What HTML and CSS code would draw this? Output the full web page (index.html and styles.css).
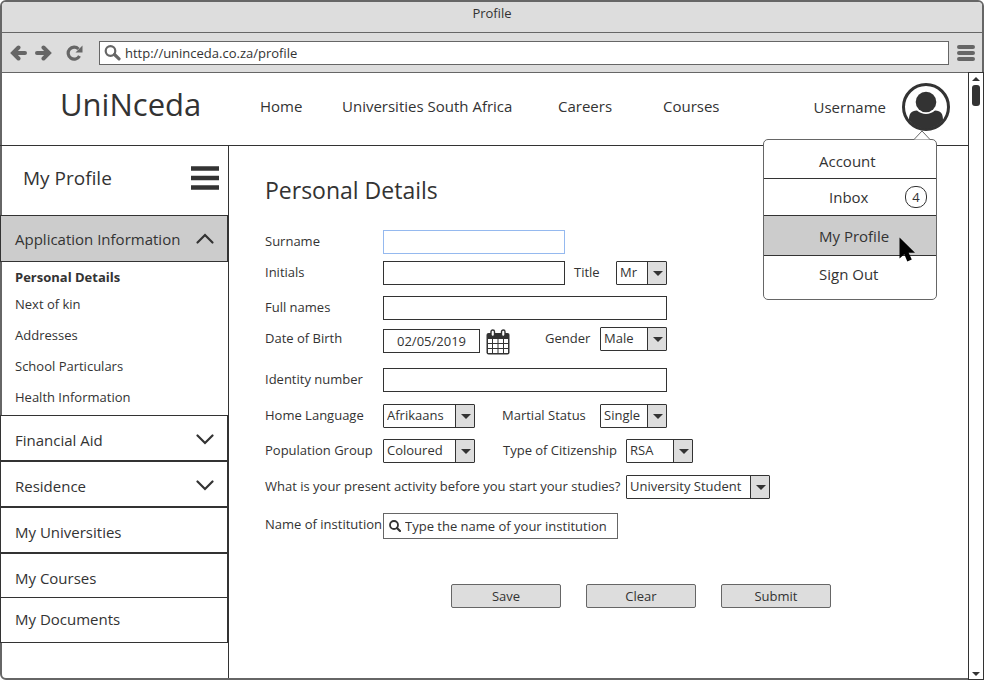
FILE: index.html
```html
<!DOCTYPE html>
<html lang="en">
<head>
<meta charset="utf-8">
<title>Profile</title>
<link rel="stylesheet" href="styles.css">
</head>
<body>
<div class="window">
  <div class="titlebar">Profile</div>
  <div class="toolbar">
    <button class="tool" type="button" aria-label="Back"><svg width="17" height="16" viewBox="0 0 17 16"><path d="M8.500 2.500 3 8l5.500 5.500M4 8h11" fill="none" stroke="#666" stroke-width="4" stroke-linecap="round"/></svg></button>
    <button class="tool" type="button" aria-label="Forward"><svg width="17" height="16" viewBox="0 0 17 16"><path d="M8.500 2.500 14 8l-5.500 5.500M13 8H2" fill="none" stroke="#666" stroke-width="4" stroke-linecap="round"/></svg></button>
    <button class="tool reload" type="button" aria-label="Reload"><svg width="17" height="16" viewBox="0 0 17 16"><path d="M13.500 11A6 6 0 1 1 12.500 4" fill="none" stroke="#666" stroke-width="3.200"/><path d="M16.500 .5V7.500H9.500z" fill="#666"/></svg></button>
    <label class="address">
      <svg width="17" height="16" viewBox="0 0 17 16"><circle cx="6.500" cy="6" r="4.800" fill="none" stroke="#666" stroke-width="2.200"/><path d="M10.500 9.500 15 13.800" stroke="#666" stroke-width="3.200" stroke-linecap="round"/></svg>
      <input type="text" aria-label="Address" value="http://uninceda.co.za/profile">
    </label>
    <button class="tool" type="button" aria-label="Browser menu"><svg width="18" height="16" viewBox="0 0 18 16"><path d="M2 2h14M2 8h14M2 14h14" stroke="#666" stroke-width="4" stroke-linecap="round"/></svg></button>
  </div>
  <div class="viewport">
    <div class="page">
      <header class="header">
        <a class="logo" href="#">UniNceda</a>
        <nav class="nav">
          <a href="#">Home</a>
          <a href="#">Universities South Africa</a>
          <a href="#">Careers</a>
          <a href="#">Courses</a>
        </nav>
        <div class="user">
          <span>Username</span>
          <svg width="48" height="48" viewBox="0 0 48 48"><circle cx="24" cy="24" r="22.500" fill="#fff" stroke="#333" stroke-width="3"/><circle cx="24" cy="19" r="10.300" fill="#333"/><path d="M7 37c0-6 2-9.500 8-9.500 5 4.600 13 4.600 18 0 6 0 8 3.500 8 9.500A21.500 21.500 0 0 1 7 37z" fill="#333"/></svg>
          <div class="menu">
            <svg class="pointer" width="18" height="10" viewBox="0 0 18 10"><path d="M1 9.500 9 1l8 8.500" fill="#fff" stroke="#666"/></svg>
            <a class="account" href="#">Account</a>
            <a class="inbox" href="#">Inbox<span class="badge">4</span></a>
            <a class="current" href="#">My Profile</a>
            <a class="signout" href="#">Sign Out</a>
            <svg class="cursor" width="17" height="26" viewBox="0 0 17 26"><path d="M.5.500V21.500L5.300 17.300 8.300 24.500 12.800 22.500 9.600 15.700H16z" fill="#000"/></svg>
          </div>
        </div>
      </header>
      <div class="columns">
        <aside class="sidebar">
          <div class="side-head">
            <h2>My Profile</h2>
            <button class="burger" type="button" aria-label="Toggle menu"><svg width="28" height="24" viewBox="0 0 28 24"><path d="M0 2.500h28M0 12h28M0 21.500h28" stroke="#333" stroke-width="4.500"/></svg></button>
          </div>
          <a class="box open" href="#">Application Information<svg width="20" height="12" viewBox="0 0 20 12"><path d="M2.500 9.500 10 2l7.500 7.500" fill="none" stroke="#333" stroke-width="2.200" stroke-linecap="round"/></svg></a>
          <div class="sub">
            <a class="active" href="#">Personal Details</a>
            <a href="#">Next of kin</a>
            <a href="#">Addresses</a>
            <a href="#">School Particulars</a>
            <a href="#">Health Information</a>
          </div>
          <a class="box" href="#">Financial Aid<svg width="20" height="12" viewBox="0 0 20 12"><path d="M2.500 1.500 10 9l7.500-7.500" fill="none" stroke="#333" stroke-width="2.200" stroke-linecap="round"/></svg></a>
          <a class="box" href="#">Residence<svg width="20" height="12" viewBox="0 0 20 12"><path d="M2.500 1.500 10 9l7.500-7.500" fill="none" stroke="#333" stroke-width="2.200" stroke-linecap="round"/></svg></a>
          <a class="box" href="#">My Universities</a>
          <a class="box" href="#">My Courses</a>
          <a class="box last" href="#">My Documents</a>
        </aside>
        <main class="main">
          <h1>Personal Details</h1>
          <form>
            <div class="fields">
              <div class="row">
                <label for="surname">Surname</label>
                <input class="medium focus" id="surname" type="text">
              </div>
              <div class="row">
                <label for="initials">Initials</label>
                <div class="group">
                  <input class="medium" id="initials" type="text">
                  <div class="pair">
                    <label for="title">Title</label>
                    <span class="select w-title"><select id="title"><option>Mr</option></select></span>
                  </div>
                </div>
              </div>
              <div class="row">
                <label for="names">Full names</label>
                <input class="wide" id="names" type="text">
              </div>
              <div class="row">
                <label for="dob">Date of Birth</label>
                <div class="group">
                  <div class="date">
                    <input id="dob" type="text" value="02/05/2019">
                    <svg width="24" height="26" viewBox="0 0 24 26"><path d="M2.500 4h19q2 0 2 2v17.500q0 2-2 2h-19q-2 0-2-2V6q0-2 2-2z" fill="#333"/><path d="M2 10h4v4H2zM7 10h4.500v4H7zM12.500 10h4.500v4h-4.500zM18 10h4v4h-4zM2 15h4v4H2zM7 15h4.500v4H7zM12.500 15h4.500v4h-4.500zM18 15h4v4h-4zM2 20h4v4H2zM7 20h4.500v4H7zM12.500 20h4.500v4h-4.500zM18 20h4v4h-4z" fill="#fff"/><rect x="5" y="1" width="3.500" height="6.500" rx="1.700" fill="#fff" stroke="#333" stroke-width="1.400"/><rect x="15.500" y="1" width="3.500" height="6.500" rx="1.700" fill="#fff" stroke="#333" stroke-width="1.400"/></svg>
                  </div>
                  <div class="pair">
                    <label class="l-gender" for="gender">Gender</label>
                    <span class="select w-short"><select id="gender"><option>Male</option></select></span>
                  </div>
                </div>
              </div>
              <div class="row">
                <label for="idno">Identity number</label>
                <input class="wide" id="idno" type="text">
              </div>
              <div class="row">
                <label for="language">Home Language</label>
                <div class="group">
                  <span class="select w-mid"><select id="language"><option>Afrikaans</option></select></span>
                  <div class="pair">
                    <label class="l-status" for="status">Martial Status</label>
                    <span class="select w-short"><select id="status"><option>Single</option></select></span>
                  </div>
                </div>
              </div>
              <div class="row">
                <label for="population">Population Group</label>
                <div class="group group-long">
                  <span class="select w-mid"><select id="population"><option>Coloured</option></select></span>
                  <div class="pair">
                    <label class="l-citizen" for="citizen">Type of Citizenship</label>
                    <span class="select w-short"><select id="citizen"><option>RSA</option></select></span>
                  </div>
                </div>
              </div>
              <div class="row question">
                <label for="activity">What is your present activity before you start your studies?</label>
                <span class="select w-long"><select id="activity"><option>University Student</option></select></span>
              </div>
              <div class="row">
                <label for="institution">Name of institution</label>
                <div class="search">
                  <svg width="12" height="12" viewBox="0 0 12 12"><circle cx="5" cy="5" r="4" fill="none" stroke="#333" stroke-width="1.800"/><path d="M8 8l3 3" stroke="#333" stroke-width="2.200" stroke-linecap="round"/></svg>
                  <input id="institution" type="text" placeholder="Type the name of your institution">
                </div>
              </div>
            </div>
            <div class="actions">
              <button type="button">Save</button>
              <button type="button">Clear</button>
              <button type="button">Submit</button>
            </div>
          </form>
        </main>
      </div>
    </div>
    <div class="scrollbar">
      <div class="arrow up"></div>
      <div class="thumb"></div>
      <div class="arrow down"></div>
    </div>
  </div>
</div>
</body>
</html>
```
FILE: styles.css
```css
* { box-sizing: border-box; }
body {
  margin: 0;
  color: #333;
  font: 13px/16px "Open Sans", "Liberation Sans", sans-serif;
}
a { color: inherit; text-decoration: none; }
h1, h2 { margin: 0; font-weight: 400; }
input, select, button { font: inherit; color: inherit; }
svg { display: block; flex: none; }

.window {
  display: flex;
  flex-direction: column;
  min-height: 100vh;
  border: 2px solid #666;
  border-radius: 6px;
}
.titlebar {
  height: 31px;
  padding: 3px 0 0;
  text-align: center;
  background: #ddd;
  border-bottom: 1px solid #666;
  border-radius: 4px 4px 0 0;
}
.toolbar {
  display: flex;
  align-items: center;
  height: 40px;
  padding: 0 7px 0 8px;
  gap: 8px;
  background: #ddd;
  border-bottom: 1px solid #666;
}
.tool { padding: 0; border: 0; background: none; }
.tool.reload { margin: 0 8px 0 6px; }
.address {
  flex: 1;
  display: flex;
  align-items: center;
  height: 24px;
  padding-left: 4px;
  gap: 4px;
  background: #fff;
  border: 1px solid #666;
}
.address input { flex: 1; padding: 0; border: 0; outline: 0; background: none; }

.viewport { flex: 1; display: flex; }
.page { flex: 1; display: flex; flex-direction: column; min-width: 0; }

.header {
  display: flex;
  align-items: center;
  height: 73px;
  margin-left: -2px;
  padding: 0 18px 4px 60px;
  border-bottom: 1px solid #333;
  font-size: 15px;
}
.logo { width: 200px; padding-bottom: 6px; font-size: 31px; line-height: 36px; }
.nav { display: grid; grid-template-columns: 82px 216px 105px auto; padding-bottom: 2px; }
.user { position: relative; display: flex; align-items: center; gap: 16px; margin-left: auto; }

.menu {
  position: absolute;
  z-index: 1;
  top: 56px;
  right: 13px;
  width: 174px;
  background: #fff;
  border: 1px solid #666;
  border-radius: 5px;
}
.menu a { display: flex; align-items: center; padding-left: 55px; }
.menu .account { height: 39px; padding-top: 4px; border-bottom: 1px solid #333; }
.menu .inbox { height: 37px; padding: 0 9px 0 65px; border-bottom: 1px solid #333; }
.menu .current { height: 40px; background: #ccc; border-bottom: 1px solid #333; }
.menu .signout { height: 43px; padding-bottom: 8px; }
.badge {
  width: 22px;
  height: 22px;
  margin-left: auto;
  border: 1px solid #333;
  border-radius: 10px;
  font-size: 13px;
  line-height: 20px;
  text-align: center;
}
.pointer { position: absolute; top: -10px; right: 5px; }
.cursor { position: absolute; top: 97px; right: 20px; }

.columns { flex: 1; display: flex; }
.sidebar { width: 227px; border-right: 1px solid #333; }
.side-head {
  display: flex;
  align-items: center;
  justify-content: space-between;
  height: 69px;
  padding: 0 9px 5px 21px;
}
.side-head h2 { font-size: 19px; line-height: 24px; }
.burger { padding: 0; border: 0; background: none; }
.box {
  display: flex;
  align-items: center;
  justify-content: space-between;
  height: 46px;
  margin-left: -2px;
  padding: 4px 12px 0 14px;
  border: 1px solid #333;
  background: #fff;
  font-size: 15px;
}
.box.open { height: 47px; padding-top: 0; background: #ccc; }
.box.last { margin-top: -2px; padding: 0 12px 2px 14px; }
.sub { display: flex; flex-direction: column; padding: 3px 13px 2px; }
.sub a { line-height: 31px; }
.sub .active { line-height: 24px; font-weight: 700; }

.main { flex: 1; padding: 30px 36px 70px; min-width: 0; }
h1 { margin-bottom: 26px; font-size: 23px; line-height: 28px; }
.fields {
  display: grid;
  grid-template-rows: 31px 35px 31px 41px 36px 35px 36px 38px 26px;
}
.row { display: flex; align-items: flex-start; }
.row label { flex: none; line-height: 22px; white-space: nowrap; }
.row > label { width: 118px; }
.row.question > label { width: 361px; }
.row input {
  height: 24px;
  padding: 0 4px;
  border: 1px solid #333;
  background: #fff;
  outline: 0;
}
.row .medium { width: 182px; }
.row .focus { border-color: #95b9ef; }
.row .wide { width: 284px; }
.group { display: flex; justify-content: space-between; width: 284px; }
.group-long { width: 310px; }
.pair { display: flex; }
.pair label { width: 42px; }
.pair .l-gender { width: 55px; }
.pair .l-status { width: 98px; }
.pair .l-citizen { width: 123px; }
.date { display: flex; align-items: flex-start; gap: 6px; padding-top: 2px; }
.row .date input { width: 97px; padding-left: 13px; }

.select { position: relative; height: 24px; }
.select::after {
  content: "";
  position: absolute;
  top: 10px;
  right: 4px;
  width: 10px;
  height: 5px;
  background: #333;
  clip-path: polygon(0 0, 100% 0, 50% 100%);
  pointer-events: none;
}
.select select {
  display: block;
  width: 100%;
  height: 24px;
  padding: 0 0 2px 3px;
  appearance: none;
  border: 1px solid #333;
  border-radius: 1px;
  background: linear-gradient(to right, #333 1px, #ddd 1px) right / 19px 100% no-repeat #fff;
}
.w-title { width: 51px; }
.w-short { width: 67px; }
.w-mid { width: 92px; }
.w-long { width: 144px; }

.search {
  display: flex;
  align-items: center;
  width: 235px;
  height: 26px;
  padding-left: 5px;
  border: 1px solid #666;
}
.row .search input { flex: 1; min-width: 0; border: 0; }
.search input::placeholder { color: #333; opacity: 1; }

.actions { display: flex; gap: 25px; padding: 45px 0 0 186px; }
.actions button {
  width: 110px;
  height: 24px;
  padding: 0 0 1px;
  border: 1px solid #666;
  border-radius: 2px;
  background: #ddd;
}

.scrollbar {
  display: flex;
  flex-direction: column;
  align-items: center;
  width: 16px;
  margin: -1px -2px -2px 0;
  padding: 4px 0 3px;
  border: 1px solid #333;
  background: #fff;
}
.thumb { width: 8px; height: 21px; margin-top: 4px; border-radius: 3px; background: #333; }
.arrow { width: 8px; height: 4px; background: #333; }
.up { clip-path: polygon(0 100%, 50% 0, 100% 100%); }
.down { margin-top: auto; clip-path: polygon(0 0, 100% 0, 50% 100%); }
```
